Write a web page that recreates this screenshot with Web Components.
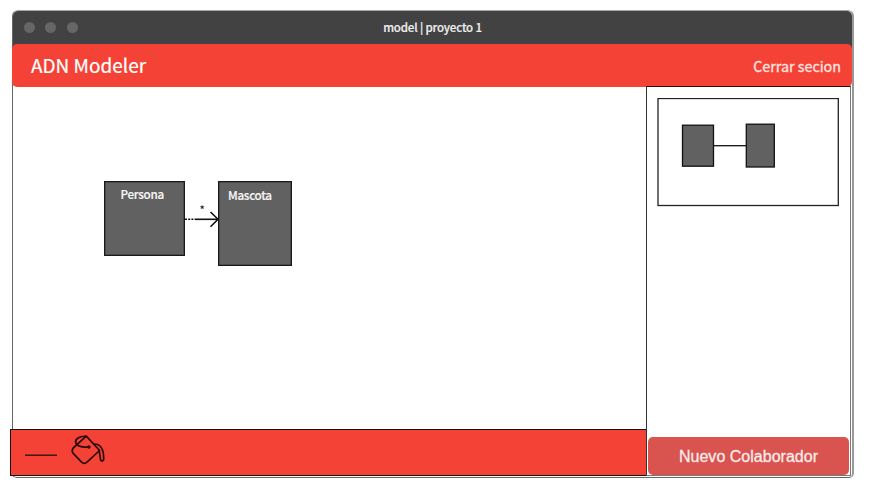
<!DOCTYPE html>
<html lang="es">
<head>
<meta charset="utf-8">
<title>ADN Modeler</title>
<style>
html,body{margin:0;background:#fff;height:100%;overflow:hidden}
body{font-family:"Noto Sans CJK SC","Noto Sans",sans-serif}
</style>
</head>
<body>
<modeler-window>
  <title-bar slot="title">model | proyecto 1</title-bar>
  <app-header slot="header">ADN Modeler<span slot="action">Cerrar secion</span></app-header>
  <diagram-canvas slot="main">
    <class-node style="left:103.5px;top:181px;width:81px;height:75px;--tx:16px;--ty:4px">Persona</class-node>
    <class-node style="left:217.5px;top:181px;width:74px;height:85px;--tx:9.5px;--ty:5px">Mascota</class-node>
    <relation-arrow></relation-arrow>
  </diagram-canvas>
  <tool-bar slot="tools"></tool-bar>
  <side-panel slot="side"><mini-map></mini-map><action-button slot="footer">Nuevo Colaborador</action-button></side-panel>
</modeler-window>
<script>
const define = (name, html) => customElements.define(name, class extends HTMLElement {
  constructor() {
    super();
    this.attachShadow({mode: 'open'}).innerHTML = html;
  }
});

define('modeler-window', `
<style>
:host{display:block;box-sizing:border-box;padding:10px 0 0 12px;width:854px;height:479px}
.frame{box-sizing:border-box;width:842px;height:468px;display:flex;flex-direction:column;border:1px solid #666;border-top-color:#a3a8a8;border-right:2px solid #999;border-radius:6px 6px 5px 5px;background:#fff}
.body{flex:1;display:grid;grid-template-columns:633px 205px;min-height:0}
.left{display:flex;flex-direction:column;min-height:0}
.left ::slotted(diagram-canvas){flex:1}
</style>
<div class="frame">
  <slot name="title"></slot><slot name="header"></slot>
  <div class="body"><div class="left"><slot name="main"></slot><slot name="tools"></slot></div><slot name="side"></slot></div>
</div>`);

define('title-bar', `
<style>
:host{display:grid;grid-template-columns:1fr auto 1fr;align-items:center;height:39px;margin-bottom:-6px;padding:0 11px 7px;box-sizing:border-box;background:#424242;border-radius:5px 5px 0 0;color:#eee;font-size:11.5px;font-weight:500;line-height:16px}
.dots{display:flex;gap:10.4px}
i{width:11px;height:11px;border-radius:50%;background:#666}
.t{position:relative;top:-.5px;white-space:pre;letter-spacing:-.15px;-webkit-text-stroke:.2px #eee}
</style>
<div class="dots"><i></i><i></i><i></i></div><span class="t"><slot></slot></span><span></span>`);

define('app-header', `
<style>
:host{display:flex;position:relative;justify-content:space-between;align-items:center;flex:none;height:43px;box-sizing:border-box;margin:0 0 0 -1px;padding:0 11px 0 19px;background:#f44336;border-radius:5px;color:#fff}
.brand{font-size:19px;line-height:24px;margin-top:-2px;white-space:nowrap;-webkit-text-stroke:.2px #fff}
.act{font-size:14.3px;line-height:20px;padding-top:1px;color:#ffe3e0;white-space:nowrap;-webkit-text-stroke:.3px #ffe3e0}
</style>
<span class="brand"><slot></slot></span><span class="act"><slot name="action"></slot></span>`);

define('diagram-canvas', `
<style>
:host{display:block;min-height:0}
.plane{position:absolute;left:0;top:0}
</style><div class="plane"><slot></slot></div>`);

define('class-node', `
<style>
:host{position:absolute;box-sizing:border-box;border:1.5px solid #191919;box-shadow:inset 0 0 0 .5px #333;background:#616161;color:#f5f5f5;font-size:11.7px;font-weight:500;line-height:16px;letter-spacing:-.3px}
span{display:block;padding:var(--ty) 0 0 var(--tx);white-space:nowrap;-webkit-text-stroke:.2px #f5f5f5}
</style><span><slot></slot></span>`);

define('relation-arrow', `
<style>
:host{position:absolute;left:184px;top:198px;width:36px;height:34px}
svg{display:block;overflow:visible}
text{font:500 11px "Noto Sans CJK SC",sans-serif}
</style>
<svg width="36" height="34" fill="none" stroke="#111" stroke-width="1.6">
<path d="M1 21.3h10" stroke-dasharray="2 1.2"/><path d="M11 21.3h22.5"/><path d="M26.5 14l7.5 7.3-7.5 7.5"/>
<text x="15.5" y="16" fill="#222" stroke="none">*</text></svg>`);

define('tool-bar', `
<style>
:host{display:flex;position:relative;flex:none;box-sizing:border-box;width:637px;height:47px;margin:0 0 1px -3px;padding:5px 0 0 14px;gap:12.5px;border:1px solid #1d0d0b;background:#f44336}
svg{display:block;overflow:visible}
</style>
<svg width="34" height="34"><path d="M0 20.2h32" stroke="#2a0c09" stroke-width="1.3"/></svg>
<svg width="38" height="34" fill="none" stroke="#2a0c09" stroke-width="1.7" stroke-linecap="round" stroke-linejoin="round">
<path d="M14.3 1.2 27.6 15.5 15 27.2q-2.7 2.4-5.4 0L1.2 18.4Q-.8 15.6 1.2 13Z"/>
<path d="M14 1.3C7.5.9 2.6 4 3.8 7.7c1 3.6 7 4.6 13 4.3"/>
<path d="M22.4 9c6.2.2 9.3 6 9.3 14.8 0 2.8-3 2.8-3.3 0-.4-3.2-.8-6.5-1.5-8.5"/>
<circle cx="16.9" cy="11.9" r=".9" fill="#2a0c09"/></svg>`);

define('side-panel', `
<style>
:host{display:flex;position:relative;flex-direction:column;justify-content:space-between;box-sizing:border-box;width:205px;margin:-1px 0 1px;padding:11px 1px 0;border:1px solid #333;border-top-color:#300b08;border-right-color:#777;border-bottom-color:#777}
</style><slot></slot><slot name="footer"></slot>`);

define('mini-map', `
<style>
:host{display:block;margin-left:9px;width:182px;height:109px}
svg{display:block}
</style>
<svg width="182" height="109" fill="#616161" stroke="#111" stroke-width="1.3">
<rect x="1" y=".5" width="180.3" height="107" fill="none" stroke="#222"/>
<path d="M57 47.7h32"/>
<rect x="25.5" y="27.2" width="31" height="41"/>
<rect x="89.3" y="26.2" width="28" height="42.8"/></svg>`);

define('action-button', `
<style>
:host{display:flex;align-items:center;justify-content:center;box-sizing:border-box;width:201px;height:38.5px;padding-top:3px;border-radius:5px;background:#d9534f;color:#fbecec;font:16px/20px "Liberation Sans",Arial,sans-serif;letter-spacing:.02px;white-space:nowrap;-webkit-text-stroke:.3px #fbecec}
</style><slot></slot>`);
</script>
</body>
</html>
